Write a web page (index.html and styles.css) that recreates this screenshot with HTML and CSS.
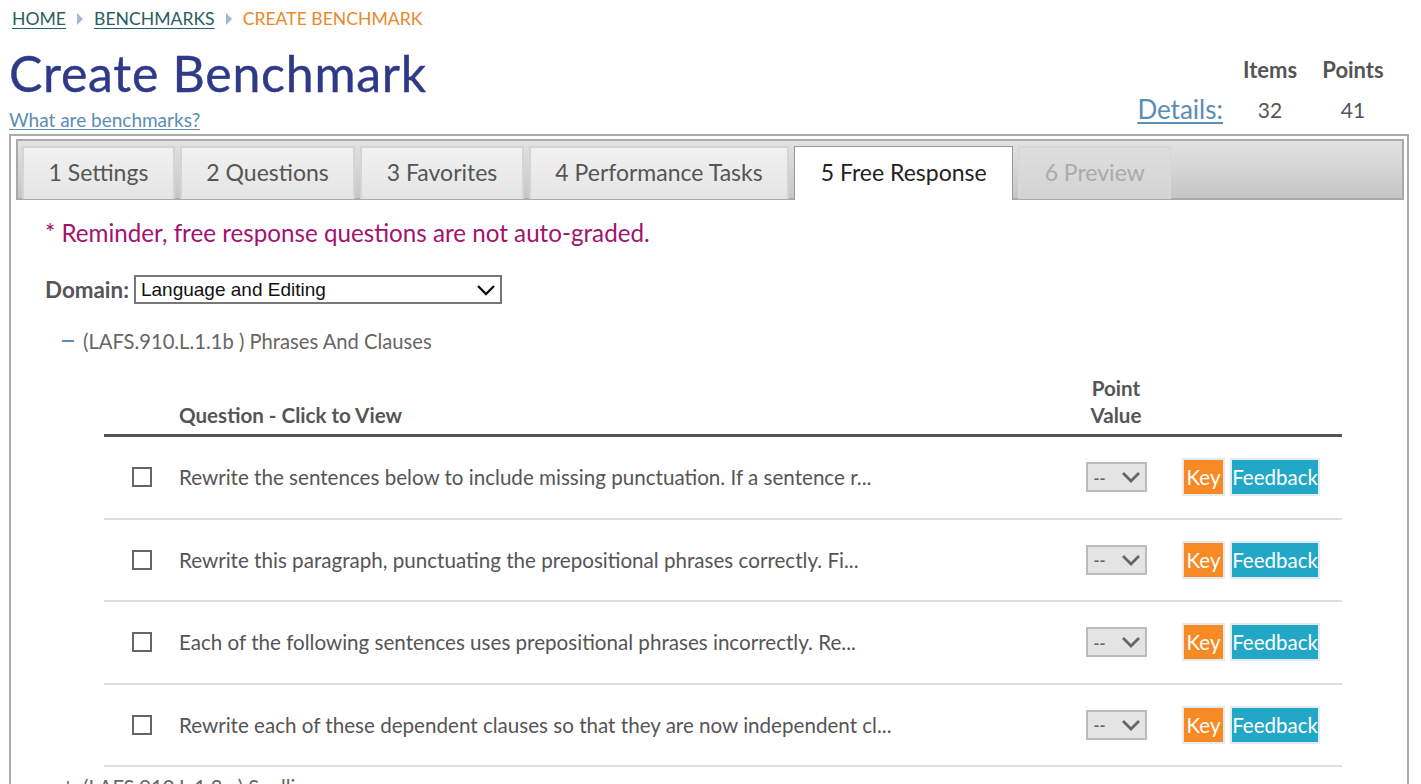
FILE: index.html
```html
<!DOCTYPE html>
<html>
<head>
<meta charset="utf-8">
<link rel="stylesheet" href="styles.css">
</head>
<body>
<nav class="crumbs">
  <a class="crumb" href="#">HOME</a>
  <span class="sep"></span>
  <a class="crumb" href="#">BENCHMARKS</a>
  <span class="sep"></span>
  <span class="crumb-current">CREATE BENCHMARK</span>
</nav>
<header class="head">
  <div class="head-left">
    <h1 class="title">Create Benchmark</h1>
    <a class="help" href="#">What are benchmarks?</a>
  </div>
  <div class="stats">
    <span></span><span class="stat-h">Items</span><span class="stat-h">Points</span>
    <a class="details" href="#">Details:</a><span class="stat-v">32</span><span class="stat-v">41</span>
  </div>
</header>
<section class="panel">
  <div class="tabs">
    <div class="tab">1 Settings</div>
    <div class="tab">2 Questions</div>
    <div class="tab">3 Favorites</div>
    <div class="tab">4 Performance Tasks</div>
    <div class="tab active">5 Free Response</div>
    <div class="tab disabled">6 Preview</div>
  </div>
  <div class="content">
    <p class="reminder">* Reminder, free response questions are not auto-graded.</p>
    <div class="domain">
      <label class="domain-label">Domain:</label>
      <div class="domain-select"><span>Language and Editing</span>
        <svg class="chev" width="20" height="12" viewBox="0 0 20 12"><path d="M2 2 L10 10 L18 2" fill="none" stroke="#111" stroke-width="2.4"/></svg>
      </div>
    </div>
    <div class="std"><span class="toggle minus"></span>(LAFS.910.L.1.1b ) Phrases And Clauses</div>
    <div class="qtable">
      <div class="qhead">
        <div></div>
        <div class="qh-title">Question - Click to View</div>
        <div class="qh-points">Point<br>Value</div>
        <div></div>
      </div>
      <div class="qrow">
        <div class="cb-cell"><span class="cb"></span></div>
        <div class="qtext">Rewrite the sentences below to include missing punctuation. If a sentence r...</div>
        <div class="pv-cell"><div class="pv"><span>--</span><svg width="20" height="12" viewBox="0 0 20 12"><path d="M2 2 L10 10 L18 2" fill="none" stroke="#666" stroke-width="2.8"/></svg></div></div>
        <div class="btn-cell"><span class="btn key">Key</span><span class="btn fb">Feedback</span></div>
      </div>
      <div class="qrow">
        <div class="cb-cell"><span class="cb"></span></div>
        <div class="qtext">Rewrite this paragraph, punctuating the prepositional phrases correctly. Fi...</div>
        <div class="pv-cell"><div class="pv"><span>--</span><svg width="20" height="12" viewBox="0 0 20 12"><path d="M2 2 L10 10 L18 2" fill="none" stroke="#666" stroke-width="2.8"/></svg></div></div>
        <div class="btn-cell"><span class="btn key">Key</span><span class="btn fb">Feedback</span></div>
      </div>
      <div class="qrow">
        <div class="cb-cell"><span class="cb"></span></div>
        <div class="qtext">Each of the following sentences uses prepositional phrases incorrectly. Re...</div>
        <div class="pv-cell"><div class="pv"><span>--</span><svg width="20" height="12" viewBox="0 0 20 12"><path d="M2 2 L10 10 L18 2" fill="none" stroke="#666" stroke-width="2.8"/></svg></div></div>
        <div class="btn-cell"><span class="btn key">Key</span><span class="btn fb">Feedback</span></div>
      </div>
      <div class="qrow">
        <div class="cb-cell"><span class="cb"></span></div>
        <div class="qtext">Rewrite each of these dependent clauses so that they are now independent cl...</div>
        <div class="pv-cell"><div class="pv"><span>--</span><svg width="20" height="12" viewBox="0 0 20 12"><path d="M2 2 L10 10 L18 2" fill="none" stroke="#666" stroke-width="2.8"/></svg></div></div>
        <div class="btn-cell"><span class="btn key">Key</span><span class="btn fb">Feedback</span></div>
      </div>
    </div>
    <div class="std std-next"><span class="toggle plus"></span>(LAFS.910.L.1.2a ) Spelling</div>
  </div>
</section>
</body>
</html>
```
FILE: styles.css
```css
html, body {
  margin: 0;
  padding: 0;
  background: #fff;
  overflow: hidden;
}
body {
  font-family: "Lato", "Open Sans", sans-serif;
  color: #555;
  width: 1421px;
  height: 784px;
}
.crumbs {
  display: flex;
  align-items: center;
  gap: 11px;
  padding: 8px 0 0 12px;
  height: 22px;
  font-size: 17.6px;
  line-height: 22px;
}
.crumb {
  color: #2b5d60;
  text-decoration: underline;
  text-underline-offset: 3px;
}
.sep {
  width: 0;
  height: 0;
  border-top: 6px solid transparent;
  border-bottom: 6px solid transparent;
  border-left: 6px solid #9bbccc;
}
.crumb-current {
  color: #e8892a;
}
.head {
  display: flex;
  justify-content: space-between;
  align-items: flex-start;
  height: 104px;
}
.head-left {
  padding-left: 9px;
}
.title {
  margin: 17px 0 0 0;
  font-family: "Lato", sans-serif;
  font-weight: 400;
  font-size: 50px;
  line-height: 52px;
  color: #2e3a87;
  letter-spacing: 0.75px;
  -webkit-text-stroke: 0.4px #2e3a87;
}
.help {
  display: block;
  margin-top: 10px;
  font-size: 19px;
  line-height: 22px;
  color: #5b8db5;
  text-underline-offset: 2px;
}
.stats {
  display: grid;
  grid-template-columns: auto 80px 86px;
  grid-template-rows: 36px 44px;
  align-items: center;
  margin: 21px 25px 0 0;
}
.stat-h {
  text-align: center;
  font-weight: 700;
  font-size: 22px;
  color: #555;
}
.stat-v {
  text-align: center;
  font-size: 21px;
  color: #555;
}
.details {
  font-size: 26px;
  color: #5b8db5;
  padding-right: 7px;
  text-align: right;
  text-underline-offset: 3px;
}
.panel {
  margin: 0 12px 0 9px;
  border: 2px solid #aaa;
  border-bottom: none;
  padding: 3px 3px 0 5px;
  height: 660px;
}
.tabs {
  display: flex;
  gap: 5px;
  height: 52px;
  padding: 5px 0 0 4px;
  border: 2px solid #aaa;
  background: linear-gradient(#e2e2e2, #c6c6c6);
  align-items: stretch;
}
.tab {
  box-sizing: border-box;
  padding: 0 24.5px 3px 24.5px;
  height: 53px;
  display: flex;
  align-items: center;
  font-size: 23px;
  color: #555;
  background: linear-gradient(#f1f1f1 0%, #ebebeb 50%, #e4e4e4 100%);
  border: 2px solid #d4d4d4;
  border-bottom: none;
}
.tab.active {
  background: #fff;
  border: 1px solid #999;
  border-bottom: none;
  color: #222;
  position: relative;
  z-index: 1;
  height: 54px;
  padding: 0 25.5px 3px 25.5px;
}
.tab.disabled {
  color: #aaa;
  background: linear-gradient(#dedede, #d3d3d3);
  border-color: #d8d8d8;
}
.content {
  padding: 18px 0 0 29px;
}
.reminder {
  margin: 0;
  font-size: 24.2px;
  line-height: 30px;
  color: #a3126d;
}
.domain {
  display: flex;
  align-items: center;
  gap: 5px;
  margin-top: 27px;
}
.domain-label {
  font-weight: 700;
  font-size: 22.4px;
  color: #555;
}
.domain-select {
  box-sizing: border-box;
  width: 368px;
  height: 29px;
  border: 2px solid #777;
  display: flex;
  align-items: center;
  justify-content: space-between;
  padding: 0 4px 0 5px;
  font-family: "Liberation Sans", Arial, sans-serif;
  font-size: 19px;
  color: #111;
}
.std {
  display: flex;
  align-items: center;
  margin: 23px 0 0 17px;
  font-size: 20.2px;
  line-height: 28px;
  color: #666;
}
.toggle {
  position: relative;
  display: inline-block;
  width: 12px;
  height: 12px;
  margin-right: 9px;
}
.toggle::before {
  content: "";
  position: absolute;
  left: 0;
  top: 5px;
  width: 12px;
  height: 2px;
  background: #5b8db5;
}
.toggle.plus::after {
  content: "";
  position: absolute;
  left: 5px;
  top: 0;
  width: 2px;
  height: 12px;
  background: #5b8db5;
}
.qtable {
  margin: 20px 0 0 59px;
  width: 1238px;
}
.qhead, .qrow {
  display: grid;
  grid-template-columns: 75px 892px 90px 181px;
}
.qhead {
  align-items: end;
  border-bottom: 3px solid #555;
  padding-bottom: 5px;
  font-weight: 700;
  font-size: 20.6px;
  line-height: 27px;
  color: #555;
}
.qh-points {
  text-align: center;
}
.qrow {
  height: 80.5px;
  align-items: center;
  border-bottom: 2px solid #ddd;
}
.cb-cell {
  padding-left: 28px;
  display: flex;
}
.cb {
  box-sizing: border-box;
  width: 20px;
  height: 20px;
  border: 2px solid #666;
  background: #fff;
}
.qtext {
  font-size: 20.6px;
  color: #555;
  white-space: nowrap;
}
.pv-cell {
  display: flex;
  justify-content: center;
}
.pv {
  box-sizing: border-box;
  width: 61px;
  height: 30px;
  background: #e4e4e4;
  border: 2px solid #bbb;
  display: flex;
  align-items: center;
  justify-content: space-between;
  padding: 0 4px 0 6px;
  color: #666;
  font-size: 16px;
  font-weight: 700;
}
.btn-cell {
  display: flex;
  gap: 5px;
  padding-left: 21px;
}
.btn {
  box-sizing: border-box;
  height: 38px;
  display: flex;
  align-items: center;
  justify-content: center;
  font-size: 20.5px;
  color: #fff;
  border: 2px solid #e3ebee;
}
.key {
  width: 43px;
  background: #f78a25;
}
.fb {
  width: 90px;
  background: #23a7c6;
}
.std-next {
  margin-top: 6px;
}
```
